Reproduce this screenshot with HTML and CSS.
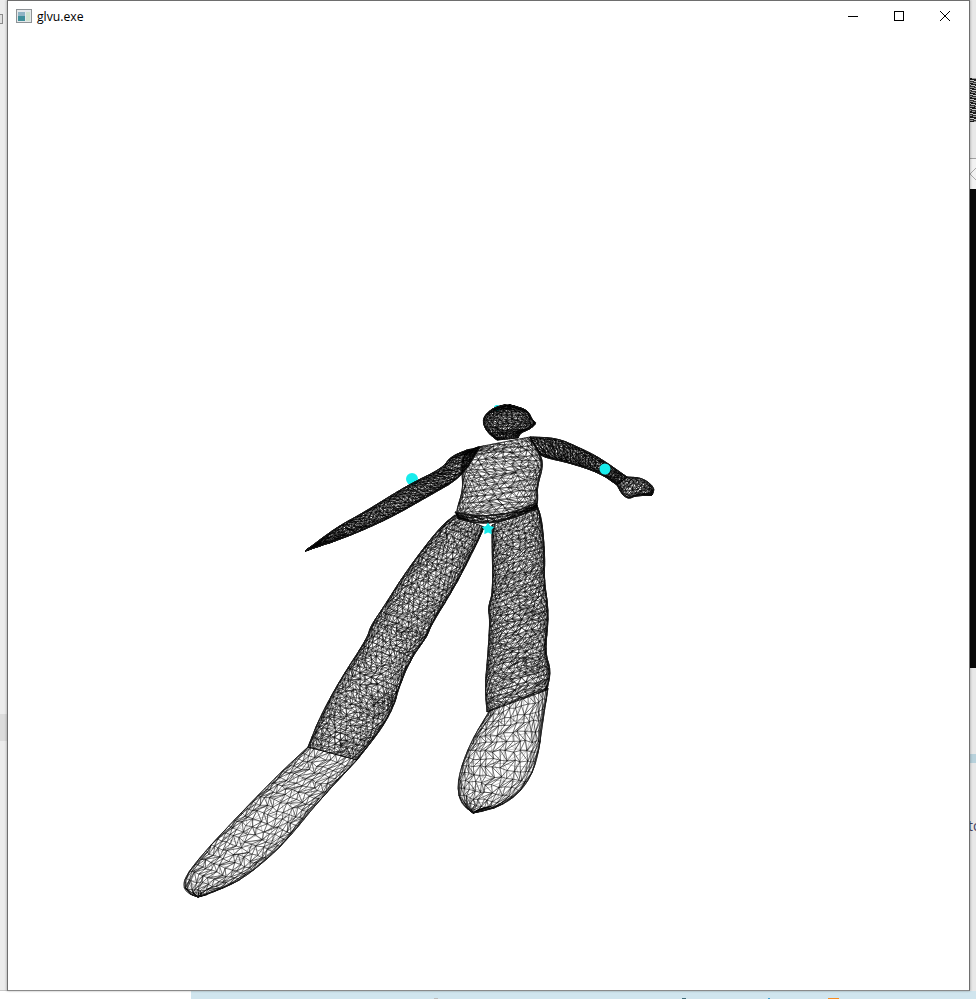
FILE: index.html
```html
<!DOCTYPE html>
<html lang="en">
<head>
<meta charset="utf-8">
<title>glvu.exe</title>
<link rel="stylesheet" href="styles.css">
</head>
<body>
<div class="desktop">
  <div class="left-strip">
    <div class="left-icon"></div>
    <div class="left-band"></div>
  </div>
  <div class="right-strip">
    <div class="right-mesh"></div>
    <div class="right-tab">
      <svg class="chev" width="7" height="14" viewBox="0 0 7 14"><path d="M7 1 1 7l6 6" fill="none" stroke="#a8a8a8" stroke-width="1"/></svg>
    </div>
    <div class="right-dark"></div>
    <div class="right-band"></div>
    <div class="right-text">to</div>
  </div>
  <div class="taskbar">
    <div class="task-white"></div>
    <div class="task-blue">
      <span class="tick tick-grey"></span>
      <span class="tick tick-teal"></span>
      <span class="tick tick-cyan"></span>
      <span class="tick tick-orange"></span>
    </div>
  </div>
  <main class="window">
    <header class="titlebar">
      <svg class="app-icon" width="16" height="14" viewBox="0 0 16 14">
        <rect x="0.5" y="0.5" width="15" height="13" fill="#e4e8ea" stroke="#8d9296"/>
        <rect x="2" y="3" width="7" height="9" fill="#3f8f9a"/>
        <rect x="2" y="3" width="7" height="4" fill="#8fb4c4"/>
        <rect x="10" y="3" width="4" height="9" fill="#cfe2cf"/>
      </svg>
      <span class="title">glvu.exe</span>
      <div class="controls">
        <svg class="ctl" width="46" height="30" viewBox="0 0 46 30"><path d="M18 15.5h10" stroke="#000" fill="none"/></svg>
        <svg class="ctl" width="46" height="30" viewBox="0 0 46 30"><rect x="18.5" y="10.5" width="9" height="9" stroke="#000" fill="none"/></svg>
        <svg class="ctl" width="46" height="30" viewBox="0 0 46 30"><path d="M18 10l10 10M28 10L18 20" stroke="#000" fill="none"/></svg>
      </div>
    </header>
    <canvas id="mesh" class="mesh" width="960" height="960"></canvas>
  </main>
</div>
<script src="mesh.js"></script>
</body>
</html>
```
FILE: styles.css
```css
* { box-sizing: border-box; }
html, body { margin: 0; padding: 0; background: #fff; }
.desktop {
  position: relative;
  width: 976px;
  height: 999px;
  overflow: hidden;
  font-family: "Segoe UI", "Open Sans", "Liberation Sans", sans-serif;
}
.left-strip {
  position: absolute;
  left: 0; top: 0;
  width: 8px;
  height: 991px;
  background: #ececec;
  display: flex;
  flex-direction: column;
}
.left-icon {
  width: 3px;
  height: 10px;
  margin-top: 14px;
  border: 1px solid #8a8a8a;
  border-left: 0;
  background: #e0e0e0;
}
.left-band {
  height: 27px;
  margin-top: 690px;
  background: #dcdcdc;
}
.right-strip {
  position: absolute;
  right: 0; top: 0;
  width: 7px;
  height: 991px;
  background: #e8e8e8;
}
.right-mesh {
  position: absolute;
  left: 0; top: 78px;
  width: 7px;
  height: 44px;
  background: repeating-linear-gradient(14deg, #1a1a1a 0 1.6px, #999 1.6px 2.4px, #333 2.4px 3.6px, #ccc 3.6px 4.6px);
}
.right-tab {
  position: absolute;
  left: 0; top: 158px;
  width: 7px;
  height: 31px;
  background: #f2f2f2;
  border-top: 1px solid #a0a0a0;
  padding-top: 8px;
}
.chev { display: block; }
.right-dark {
  position: absolute;
  left: 0; top: 189px;
  width: 7px;
  height: 479px;
  background: #0a0a0a;
}
.right-band {
  position: absolute;
  left: 0; top: 754px;
  width: 7px;
  height: 9px;
  background: #b9d2dc;
}
.right-text {
  position: absolute;
  left: -1px; top: 817px;
  font-size: 14px;
  line-height: 18px;
  color: #446;
  white-space: nowrap;
}
.taskbar {
  position: absolute;
  left: 0; top: 990px;
  width: 976px;
  height: 9px;
  display: flex;
}
.task-white {
  width: 191px;
  background: #fff;
  border-top: 1px solid #c8c8c8;
}
.task-blue {
  position: relative;
  flex: 1;
  background: #d0e5ee;
  margin-top: 1px;
}
.tick { position: absolute; top: 7px; height: 1px; }
.tick-grey { left: 243px; width: 4px; background: #bbb; }
.tick-teal { left: 491px; width: 4px; background: #3d6a75; }
.tick-cyan { left: 577px; width: 2px; background: #3aa0d0; }
.tick-orange { left: 637px; width: 11px; height: 1px; background: #f58a1f; }
.window {
  position: absolute;
  left: 7px; top: 0;
  width: 963px;
  height: 991px;
  background: #fff;
  border: 1px solid #6e6e6e;
  border-bottom-color: #8a8a8a;
  box-shadow: -1px 0 2px rgba(0,0,0,.18), 1px 0 2px rgba(0,0,0,.18);
  display: flex;
  flex-direction: column;
}
.titlebar {
  height: 30px;
  flex: none;
  display: flex;
  align-items: center;
}
.app-icon { margin-left: 8px; }
.title {
  margin-left: 5px;
  font-size: 12.2px;
  color: #000;
}
.controls { margin-left: auto; display: flex; padding-right: 1px; }
.ctl { display: block; }
.mesh { display: block; width: 960px; height: 960px; }
```
FILE: mesh.js
```js
(function () {
  var OX = 8, OY = 31;
  var ctx = document.getElementById('mesh').getContext('2d');
  var seed = 12345;
  function rnd() { seed = (seed * 16807) % 2147483647; return seed / 2147483647; }

  function smooth(pts) {
    var out = pts;
    for (var n = 0; n < 2; n++) {
      var next = [out[0]];
      for (var i = 0; i < out.length - 1; i++) {
        var a = out[i], b = out[i + 1];
        next.push([a[0] * 0.75 + b[0] * 0.25, a[1] * 0.75 + b[1] * 0.25]);
        next.push([a[0] * 0.25 + b[0] * 0.75, a[1] * 0.25 + b[1] * 0.75]);
      }
      next.push(out[out.length - 1]);
      out = next;
    }
    return out;
  }

  function sampler(pts) {
    var d = [0], i;
    for (i = 1; i < pts.length; i++) {
      d[i] = d[i - 1] + Math.hypot(pts[i][0] - pts[i - 1][0], pts[i][1] - pts[i - 1][1]);
    }
    var len = d[d.length - 1];
    return function (t) {
      var s = t * len, k = 1;
      while (k < pts.length - 1 && d[k] < s) k++;
      var f = (s - d[k - 1]) / ((d[k] - d[k - 1]) || 1);
      return [pts[k - 1][0] + (pts[k][0] - pts[k - 1][0]) * f, pts[k - 1][1] + (pts[k][1] - pts[k - 1][1]) * f];
    };
  }

  function tube(part, rows, cols, jit, shift) {
    var L = sampler(part.L), R = sampler(part.R);
    var grid = [], i, j;
    for (i = 0; i <= rows; i++) {
      var t = Math.min(1, (i + shift * (i > 0 && i < rows ? 1 : 0)) / rows), a = L(t), b = R(t), row = [];
      for (j = 0; j <= cols; j++) {
        var ang = Math.PI * j / cols;
        var inner = j > 0 && j < cols;
        if (inner) ang += (i % 2 ? 0.5 : 0) * Math.PI / cols * (j === cols - 1 ? 0.4 : 1);
        var u = (1 - Math.cos(ang)) / 2;
        var edge = inner && i > 0 && i < rows;
        var amt = edge ? jit * (0.35 + 0.65 * Math.sin(ang)) : 0;
        row.push([
          a[0] + (b[0] - a[0]) * u + (rnd() - 0.5) * amt,
          a[1] + (b[1] - a[1]) * u + (rnd() - 0.5) * amt
        ]);
      }
      grid.push(row);
    }
    ctx.beginPath();
    function seg(p, q) { ctx.moveTo(p[0], p[1]); ctx.lineTo(q[0], q[1]); }
    for (i = 0; i <= rows; i++) {
      for (j = 0; j <= cols; j++) {
        var p = grid[i][j];
        if (j < cols) seg(p, grid[i][j + 1]);
        if (i < rows) {
          seg(p, grid[i + 1][j]);
          if (j < cols) {
            if (rnd() < 0.5) seg(p, grid[i + 1][j + 1]);
            else seg(grid[i][j + 1], grid[i + 1][j]);
          }
        }
      }
    }
    ctx.stroke();
  }

  function silhouette(part, close) {
    ctx.beginPath();
    part.L.forEach(function (p, i) { if (i) ctx.lineTo(p[0], p[1]); else ctx.moveTo(p[0], p[1]); });
    if (close) {
      part.R.slice().reverse().forEach(function (p) { ctx.lineTo(p[0], p[1]); });
      ctx.closePath();
    } else {
      part.R.forEach(function (p, i) { if (i) ctx.lineTo(p[0], p[1]); else ctx.moveTo(p[0], p[1]); });
    }
  }

  // rows, cols, jitter, width, alpha for each of the mesh's two shells
  var leftFoot = { L: [[308,747],[280,773],[237,817],[200,857],[183,880],[185,892],[198,897]],
      R: [[357,760],[317,803],[293,833],[270,857],[237,883],[198,897]],
      front: [24, 13, 3.4, 0.6, 0.95], back: [14, 9, 3, 0.5, 0.45] };
  var rightFoot = { L: [[490,710],[470,743],[457,780],[460,803],[473,813]],
      R: [[548,688],[543,720],[537,763],[523,790],[500,807],[473,813]],
      front: [15, 15, 3.2, 0.6, 0.95], back: [9, 9, 3, 0.5, 0.45] };
  var leftLeg = { L: [[455,515],[440,527],[407,570],[383,608],[370,627],[368,637],[340,680],[320,717],[308,747]],
      R: [[484,527],[480,537],[457,583],[430,627],[428,635],[410,660],[398,690],[395,703],[383,727],[357,760]],
      front: [50, 15, 2.6, 0.6, 0.95], back: [42, 13, 2.6, 0.6, 0.85] };
  var rightLeg = { L: [[492,525],[492,537],[493,593],[488,607],[490,620],[488,653],[485,687],[487,712]],
      R: [[537,505],[542,520],[545,557],[544,580],[549,613],[545,653],[551,670],[547,690]],
      front: [44, 14, 2.6, 0.6, 0.95], back: [38, 12, 2.6, 0.6, 0.85] };
  var parts = [
    leftFoot, rightFoot, leftLeg, rightLeg,
    { L: [[478,447],[462,455],[462,473],[463,490],[456,512],[458,519]],
      R: [[530,437],[541,455],[543,467],[537,487],[538,500],[536,510]],
      front: [15, 14, 2.6, 0.6, 0.95], back: [13, 12, 2.6, 0.6, 0.75] },
    { L: [[455,512],[475,516],[500,515],[520,510],[536,503]],
      R: [[459,519],[475,523],[495,523],[520,516],[537,508]],
      front: [16, 3, 0.8, 0.7, 0.9], back: [12, 3, 0.8, 0.7, 0.9] },
    { L: [[467,450],[450,457],[443,468],[408,485],[363,513],[337,527],[305,551]],
      R: [[480,447],[462,477],[427,497],[390,518],[347,537],[305,551]],
      front: [58, 8, 1.6, 0.72, 0.95], back: [48, 7, 1.6, 0.72, 0.95] },
    { L: [[530,437],[557,438],[580,448],[600,458],[627,477]],
      R: [[541,455],[547,458],[570,463],[600,473],[617,485]],
      front: [34, 8, 1.6, 0.72, 0.95], back: [28, 7, 1.6, 0.72, 0.95] },
    { L: [[627,477],[643,478],[655,488],[652,495]],
      R: [[617,485],[623,496],[630,499],[633,496],[652,495]],
      front: [12, 8, 1.2, 0.65, 0.95], back: [9, 6, 1.2, 0.65, 0.95] },
    { L: [[505,405],[493,408],[484,416],[483,424],[488,433],[497,440]],
      R: [[510,405],[528,410],[532,420],[537,423],[530,429],[520,433],[518,438]],
      front: [15, 15, 1.4, 0.72, 0.95], back: [13, 13, 1.4, 0.72, 0.95] }
  ];

  ctx.translate(-OX, -OY);
  ctx.lineJoin = 'round';

  function dot(x, y, r) {
    ctx.beginPath();
    ctx.arc(x, y, r, 0, Math.PI * 2);
    ctx.fillStyle = '#18ecec';
    ctx.fill();
  }

  dot(497, 408, 3);
  dot(412, 479, 6);

  parts.forEach(function (p) {
    p.L = smooth(p.L);
    p.R = smooth(p.R);
    ctx.strokeStyle = 'rgba(0,0,0,' + p.back[4] + ')';
    ctx.lineWidth = p.back[3];
    tube(p, p.back[0], p.back[1], p.back[2], 0.5);
    ctx.strokeStyle = 'rgba(0,0,0,' + p.front[4] + ')';
    ctx.lineWidth = p.front[3];
    tube(p, p.front[0], p.front[1], p.front[2], 0);
    silhouette(p, false);
    ctx.lineWidth = 0.9;
    ctx.strokeStyle = 'rgba(30,30,30,.9)';
    ctx.stroke();
  });

  // cloth folds on the legs, kept inside each leg's silhouette
  function fold(part, cx, cy, rx, ry, rot, n) {
    ctx.save();
    silhouette(part, true);
    ctx.clip();
    ctx.lineWidth = 0.6;
    ctx.strokeStyle = 'rgba(0,0,0,.8)';
    ctx.beginPath();
    for (var i = 0; i < n; i++) {
      var a = rnd() * Math.PI * 2, q = Math.sqrt(rnd());
      var x = Math.cos(a) * rx * q, y = Math.sin(a) * ry * q;
      var c = Math.cos(rot), s = Math.sin(rot);
      var px = cx + x * c - y * s, py = cy + x * s + y * c;
      ctx.moveTo(px, py);
      ctx.lineTo(px + (rnd() - 0.5) * 8, py + (rnd() - 0.5) * 8);
    }
    ctx.stroke();
    ctx.restore();
  }
  fold(leftLeg, 378, 705, 22, 10, -0.5, 90);
  fold(leftLeg, 405, 632, 24, 6, 0.3, 50);
  fold(rightLeg, 530, 665, 16, 8, 0, 50);
  fold(rightLeg, 520, 612, 22, 5, 0, 40);
  fold(leftLeg, 345, 745, 12, 6, -0.8, 30);

  dot(605, 469, 5.5);
  // the crotch marker shows as a small star between the mesh triangles
  ctx.beginPath();
  for (var i = 0; i < 10; i++) {
    var r = i % 2 ? 3.6 : 6.4, a = -Math.PI / 2 + i * Math.PI / 5;
    ctx.lineTo(488 + Math.cos(a) * r, 529 + Math.sin(a) * r);
  }
  ctx.closePath();
  ctx.fillStyle = '#18ecec';
  ctx.fill();
})();
```
